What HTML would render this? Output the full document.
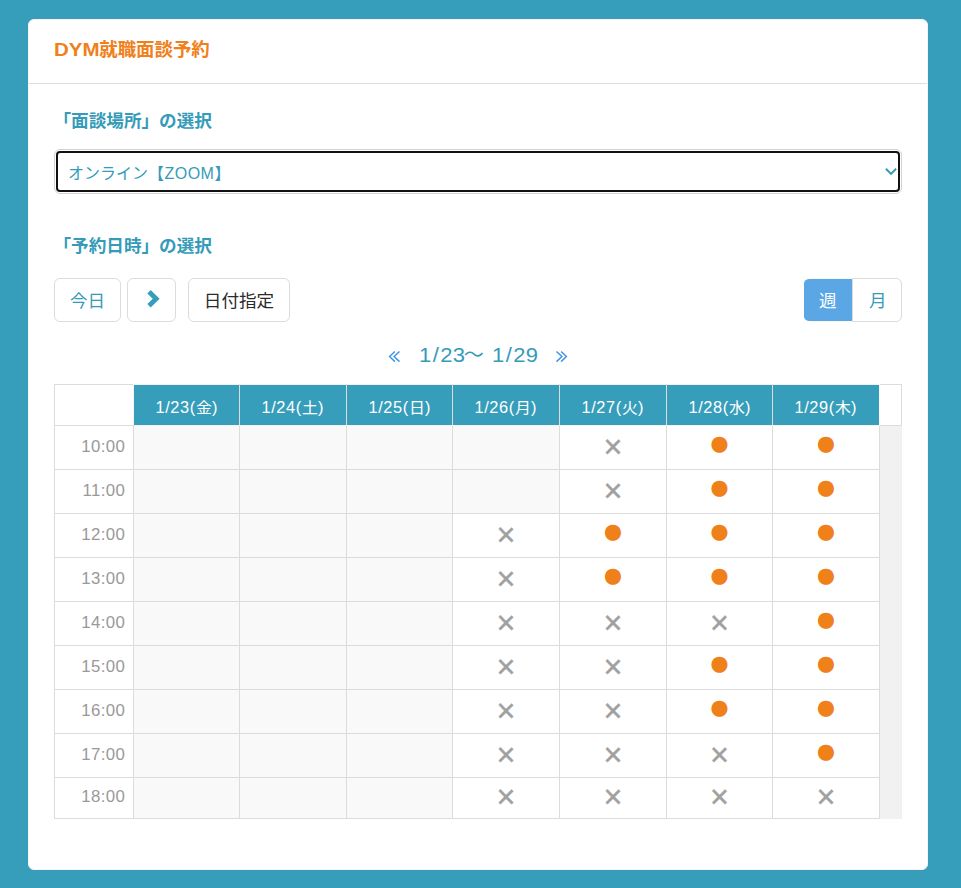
<!DOCTYPE html>
<html lang="ja"><head><meta charset="utf-8"><title>DYM就職面談予約</title>
<style>
*{box-sizing:border-box}
html,body{margin:0;padding:0}
body{width:961px;height:888px;overflow:hidden;background:#369ebb;font-family:"Liberation Sans","Noto Sans CJK JP",sans-serif;color:#333;position:relative}
.card{position:absolute;left:28px;top:19px;width:900px;height:851px;background:#fff;border-radius:6px;border:1px solid #f8f2f2}
.j{position:relative;display:inline-block;white-space:nowrap;line-height:0}
.j svg{display:inline-block}
.j .t{position:absolute;left:0;top:0;width:100%;height:100%;overflow:hidden;color:transparent;font-size:1px;line-height:1;white-space:nowrap;pointer-events:none}
.abs{position:absolute;white-space:nowrap}
h1{margin:0;font-size:18.4px;font-weight:bold;color:#f0801a;line-height:30px;left:54px;top:35px}
h1 .dym{display:inline-block;font-size:19px;transform:scaleX(1.08);transform-origin:0 50%;margin-right:3.1px}
.hr{left:29px;top:83px;width:898px;height:1px;background:#dedede}
h2{margin:0;font-size:17.6px;font-weight:bold;color:#359bb8;line-height:30px;left:54px}
.sel{left:54px;top:149px;width:848px;height:45px;border:1px solid #d2d2d2;border-radius:6px;background:#fff;padding:1px}
.sel .in{width:100%;height:100%;border:2px solid #111;border-radius:4px;display:flex;align-items:center;padding-left:10px;font-size:16px;color:#359bb8;position:relative}
.sel .chev{position:absolute;left:826px;top:13px}
.sel b{font-weight:normal;letter-spacing:.5px;margin-left:.4px}
.btn{top:278px;height:44px;border:1px solid #dcdcdc;border-radius:6px;background:#fff;display:flex;align-items:center;justify-content:center;font-size:17.6px;padding-bottom:1.5px}
.wk{left:388px;top:340px;height:30px;line-height:30px;font-size:20px;color:#359bb8;letter-spacing:.3px}
.wk i{font-style:normal;margin:0 1px}
.wk .n{display:inline-block;transform:scale(1.1,1.02);transform-origin:0 70%;margin-right:4.2px}
.wk .a{letter-spacing:0}
.wk .a svg{vertical-align:-.5px}
table{position:absolute;left:54px;top:384px;width:847px;border-collapse:collapse;table-layout:fixed;font-size:15px}
td,th{border:1px solid #dcdcdc;padding:0;text-align:center;vertical-align:middle;font-weight:normal}
th.d{background:#369ebb;color:#fff;font-size:15px;letter-spacing:.6px;border-top-color:#f6f1f1;border-bottom-color:#f6f1f1}
th.c{border-right-color:#f6f1f1}
th.d.e{border-right-color:#fbf9f9}
th.d span.w{position:relative;top:1.3px;display:inline-block;transform:scale(1.09,1.05)}
th.d span.k{font-size:14.6px;letter-spacing:0}
tr.h th{height:41px}
td{height:44px}
td.tm{text-align:right;padding-right:8px;color:#999;letter-spacing:.35px}
td.tm span{position:relative;top:-1.5px;display:inline-block;transform:scale(1.12,1.06);transform-origin:100% 100%}
td.p{background:#f9f9f9}
td.sb{background:#f1f1f1;border:none;border-right:1px solid #f1f1f1}
tr.l td.sb{border-bottom:1px solid #f1f1f1}
.o,.x{display:block;margin:0 auto;width:30px;height:30px;line-height:30px;text-align:center;position:relative}
.o{color:#f0801a;font-size:37.2px;top:-6px}
.x{color:#a0a0a0;font-size:32.4px;top:-1px;-webkit-text-stroke:.4px #a0a0a0}
tr.l td{height:41px}
</style></head>
<body>
<div class="card"></div>
<h1 class="abs"><span class="dym">DYM</span><span>就職面談予約</span></h1>
<div class="abs hr"></div>
<h2 class="abs" style="top:106px"><span style="margin-left:-.5px">「</span><span>面談場所</span><span>」</span><span>の選択</span></h2>
<div class="abs sel"><div class="in"><span><span>オンライン</span><span>【</span><b>ZOOM</b><span>】</span></span><svg class="chev" width="14" height="11" viewBox="884 166 14 11"><path d="M885.9 168.7 L891 173.9 L896.1 168.7" fill="none" stroke="#359bb8" stroke-width="2"/></svg></div></div>
<h2 class="abs" style="top:231px"><span style="margin-left:-.5px">「</span><span>予約日時</span><span>」</span><span>の選択</span></h2>
<div class="abs btn" style="left:54px;width:67px;color:#359bb8"><span>今日</span></div>
<div class="abs btn" style="left:127px;width:49px"><svg style="position:absolute;left:17px;top:9px" width="16" height="22" viewBox="145 288 16 22"><path d="M149 291.7 L156.2 298.7 L149 305.7" fill="none" stroke="#369ebb" stroke-width="4.8"/></svg></div>
<div class="abs btn" style="left:188px;width:102px;color:#2b2b2b"><span>日付指定</span></div>
<div class="abs btn" style="left:804px;width:48px;color:#fff;background:#5ba7e6;border-color:#faf6f2;border-right:0;border-left:0;background-clip:padding-box;border-radius:5px 0 0 5px;padding-right:.5px"><span>週</span></div>
<div class="abs btn" style="left:852px;width:50px;color:#359bb8;border-radius:0 6px 6px 0;padding-left:1.6px"><span>月</span></div>
<div class="abs wk"><span class="j a"><svg width="13" height="13" viewBox="0 0 13 13"><path d="M6.9 1.4 L1.6 6.6 L6.9 11.6 M11.5 1.4 L6.1 6.6 L11.5 11.6" fill="none" stroke="#4094e6" stroke-width="1.45"/></svg><span class="t">«</span></span><span class="n" style="margin-left:18.1px">1<i>/</i>23</span><span style="display:inline-block;letter-spacing:0;margin:0 -.6px 0 -1.8px">～</span><span class="n" style="margin-left:9.2px">1<i>/</i>29</span><span style="margin-left:16.2px"></span><span class="j a"><svg width="13" height="13" viewBox="0 0 13 13" style="transform:scaleX(-1)"><path d="M6.9 1.4 L1.6 6.6 L6.9 11.6 M11.5 1.4 L6.1 6.6 L11.5 11.6" fill="none" stroke="#4094e6" stroke-width="1.45"/></svg><span class="t">»</span></span></div>
<table><colgroup><col style="width:79px"><col style="width:106px"><col style="width:107px"><col style="width:106px"><col style="width:107px"><col style="width:107px"><col style="width:106px"><col style="width:107px"><col style="width:22px"></colgroup>
<tr class="h"><th class="c"></th><th class="d"><span class="w">1/23(<span class="k">金</span>)</span></th><th class="d"><span class="w">1/24(<span class="k">土</span>)</span></th><th class="d"><span class="w">1/25(<span class="k">日</span>)</span></th><th class="d"><span class="w">1/26(<span class="k">月</span>)</span></th><th class="d"><span class="w">1/27(<span class="k">火</span>)</span></th><th class="d"><span class="w">1/28(<span class="k">水</span>)</span></th><th class="d e"><span class="w">1/29(<span class="k">木</span>)</span></th><th></th></tr>
<tr><td class="tm"><span>10:00</span></td><td class="p"></td><td class="p"></td><td class="p"></td><td class="p"></td><td><span class="x">×</span></td><td><span class="o">●</span></td><td><span class="o">●</span></td><td class="sb"></td></tr>
<tr><td class="tm"><span>11:00</span></td><td class="p"></td><td class="p"></td><td class="p"></td><td class="p"></td><td><span class="x">×</span></td><td><span class="o">●</span></td><td><span class="o">●</span></td><td class="sb"></td></tr>
<tr><td class="tm"><span>12:00</span></td><td class="p"></td><td class="p"></td><td class="p"></td><td><span class="x">×</span></td><td><span class="o">●</span></td><td><span class="o">●</span></td><td><span class="o">●</span></td><td class="sb"></td></tr>
<tr><td class="tm"><span>13:00</span></td><td class="p"></td><td class="p"></td><td class="p"></td><td><span class="x">×</span></td><td><span class="o">●</span></td><td><span class="o">●</span></td><td><span class="o">●</span></td><td class="sb"></td></tr>
<tr><td class="tm"><span>14:00</span></td><td class="p"></td><td class="p"></td><td class="p"></td><td><span class="x">×</span></td><td><span class="x">×</span></td><td><span class="x">×</span></td><td><span class="o">●</span></td><td class="sb"></td></tr>
<tr><td class="tm"><span>15:00</span></td><td class="p"></td><td class="p"></td><td class="p"></td><td><span class="x">×</span></td><td><span class="x">×</span></td><td><span class="o">●</span></td><td><span class="o">●</span></td><td class="sb"></td></tr>
<tr><td class="tm"><span>16:00</span></td><td class="p"></td><td class="p"></td><td class="p"></td><td><span class="x">×</span></td><td><span class="x">×</span></td><td><span class="o">●</span></td><td><span class="o">●</span></td><td class="sb"></td></tr>
<tr><td class="tm"><span>17:00</span></td><td class="p"></td><td class="p"></td><td class="p"></td><td><span class="x">×</span></td><td><span class="x">×</span></td><td><span class="x">×</span></td><td><span class="o">●</span></td><td class="sb"></td></tr>
<tr class="l"><td class="tm"><span>18:00</span></td><td class="p"></td><td class="p"></td><td class="p"></td><td><span class="x">×</span></td><td><span class="x">×</span></td><td><span class="x">×</span></td><td><span class="x">×</span></td><td class="sb"></td></tr>
</table>
</body></html>
